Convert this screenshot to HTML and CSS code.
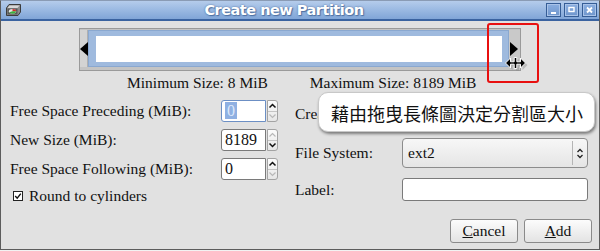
FILE: index.html
```html
<!DOCTYPE html>
<html>
<head>
<meta charset="utf-8">
<link rel="stylesheet" href="styles.css">
</head>
<body>
<div class="window">
  <div class="titlebar">
    <svg class="app-icon" width="17" height="14" viewBox="0 0 17 14">
      <path d="M1.5 5 L4 1.5 L15.5 1.5 L15.5 9 L13 12.5 L1.5 12.5 Z" fill="#8c8c8c" stroke="#3c3c3c" stroke-width="1"/>
      <path d="M2.5 5 L4.5 2.5 L14.5 2.5 L12.5 5 Z" fill="#d8d8d8"/>
      <rect x="2.5" y="5.5" width="10" height="6" fill="#5a5a5a"/>
      <ellipse cx="7.5" cy="8.3" rx="3.6" ry="2.4" fill="#e8e8e8"/>
      <path d="M7.5 8.3 L7.5 5.9 A3.6 2.4 0 0 1 11.1 8.3 Z" fill="#d42a2a"/>
      <path d="M7.5 8.3 L11.1 8.3 A3.6 2.4 0 0 1 4.2 9.3 Z" fill="#3fae3f"/>
    </svg>
    <div class="title">Create new Partition</div>
    <div class="wm-buttons">
      <span class="wm-btn"><svg width="13" height="12" viewBox="0 0 13 12"><rect x="4" y="8" width="5" height="2" fill="#fff"/></svg></span>
      <span class="wm-btn"><svg width="13" height="12" viewBox="0 0 13 12"><rect x="4" y="3.5" width="5" height="4" fill="none" stroke="#fff" stroke-width="1.4"/></svg></span>
      <span class="wm-btn"><svg width="13" height="12" viewBox="0 0 13 12"><path d="M4 3.5 L9 8.5 M9 3.5 L4 8.5" stroke="#fff" stroke-width="1.8"/></svg></span>
    </div>
  </div>

  <div class="content">
    <div class="slider">
      <div class="handle handle-left"><span class="tri-left"></span></div>
      <div class="bar"><div class="bar-inner"></div></div>
      <div class="handle handle-right"><span class="tri-right"></span></div>
    </div>

    <div class="limits">
      <span class="min">Minimum Size: 8 MiB</span>
      <span class="max">Maximum Size: 8189 MiB</span>
    </div>

    <div class="form">
      <div class="left-col">
        <div class="spin-grid">
          <span class="lbl">Free Space Preceding (MiB):</span>
          <div class="spin">
            <div class="spin-entry focused"><span class="sel">0</span></div>
            <div class="spin-btns">
              <span class="sb"><svg width="9" height="6" viewBox="0 0 9 6"><path d="M1.5 4.5 L4.5 1.5 L7.5 4.5" fill="none" stroke="#111" stroke-width="1.5"/></svg></span>
              <span class="sb"><svg width="9" height="6" viewBox="0 0 9 6"><path d="M1.5 1.5 L4.5 4.5 L7.5 1.5" fill="none" stroke="#b8b8b8" stroke-width="1.2"/></svg></span>
            </div>
          </div>

          <span class="lbl">New Size (MiB):</span>
          <div class="spin">
            <div class="spin-entry">8189</div>
            <div class="spin-btns">
              <span class="sb"><svg width="9" height="6" viewBox="0 0 9 6"><path d="M1.5 4.5 L4.5 1.5 L7.5 4.5" fill="none" stroke="#b8b8b8" stroke-width="1.2"/></svg></span>
              <span class="sb"><svg width="9" height="6" viewBox="0 0 9 6"><path d="M1.5 1.5 L4.5 4.5 L7.5 1.5" fill="none" stroke="#111" stroke-width="1.5"/></svg></span>
            </div>
          </div>

          <span class="lbl">Free Space Following (MiB):</span>
          <div class="spin">
            <div class="spin-entry">0</div>
            <div class="spin-btns">
              <span class="sb"><svg width="9" height="6" viewBox="0 0 9 6"><path d="M1.5 4.5 L4.5 1.5 L7.5 4.5" fill="none" stroke="#111" stroke-width="1.5"/></svg></span>
              <span class="sb"><svg width="9" height="6" viewBox="0 0 9 6"><path d="M1.5 1.5 L4.5 4.5 L7.5 1.5" fill="none" stroke="#b8b8b8" stroke-width="1.2"/></svg></span>
            </div>
          </div>
        </div>
        <div class="check">
          <svg class="checkbox" width="10" height="10" viewBox="0 0 10 10">
            <rect x="0.5" y="0.5" width="9" height="9" fill="#fff" stroke="#222" stroke-width="1"/>
            <path d="M2.2 5 L4.2 7.2 L7.8 2.6" fill="none" stroke="#111" stroke-width="1.4"/>
          </svg>
          <span>Round to cylinders</span>
        </div>
      </div>

      <div class="right-col">
        <div class="fields">
          <span class="lbl">Create as:</span>
          <div class="combo"></div>

          <span class="lbl">File System:</span>
          <div class="combo">
            <span class="combo-text">ext2</span>
            <span class="combo-arrow">
              <svg width="8" height="11" viewBox="0 0 8 11"><path d="M1.5 4 L4 1.5 L6.5 4 M1.5 7 L4 9.5 L6.5 7" fill="none" stroke="#222" stroke-width="1.3"/></svg>
            </span>
          </div>

          <span class="lbl">Label:</span>
          <div class="entry"></div>
        </div>
        <div class="actions">
          <button class="btn"><u>C</u>ancel</button>
          <button class="btn"><u>A</u>dd</button>
        </div>
      </div>
    </div>
  </div>

  <div class="tooltip">藉由拖曳長條圖決定分割區大小</div>
  <div class="highlight"></div>
  <svg class="cursor" width="24" height="17" viewBox="0 0 24 17">
    <path d="M2 8.5 L7 3.5 L7 7 L10.5 7 L10.5 3 L13.5 3 L13.5 7 L17 7 L17 3.5 L22 8.5 L17 13.5 L17 10 L13.5 10 L13.5 14 L10.5 14 L10.5 10 L7 10 L7 13.5 Z" fill="#777" opacity="0.35" transform="translate(1.5,1.5)"/>
    <path d="M1.5 8 L6.5 3 L6.5 6.8 L10.2 6.8 L10.2 2.5 L12.8 2.5 L12.8 6.8 L16.5 6.8 L16.5 3 L21.5 8 L16.5 13 L16.5 9.2 L12.8 9.2 L12.8 13.5 L10.2 13.5 L10.2 9.2 L6.5 9.2 L6.5 13 Z" fill="#000" stroke="#fff" stroke-width="1" stroke-linejoin="round"/>
  </svg>
</div>
</body>
</html>
```

FILE: styles.css
```css
* { box-sizing: border-box; }

html, body {
  margin: 0;
  padding: 0;
}

body {
  width: 600px;
  height: 251px;
  overflow: hidden;
  background: #f2f2f2;
  font-family: "Liberation Serif", serif;
  font-size: 15.5px;
  color: #111;
}

.window {
  position: relative;
  width: 600px;
  height: 250px;
  border: 1px solid #5c5c5c;
  border-top-color: #8a9bb4;
  background: #e1e1e1;
}

/* ---------- title bar ---------- */
.titlebar {
  display: flex;
  align-items: center;
  height: 20px;
  background: linear-gradient(#b5cceb, #9ab9e2 50%, #80a5d7);
  border-bottom: 2px solid #3a63a0;
}

.app-icon {
  margin-left: 4px;
  flex: none;
}

.title {
  flex: 1;
  text-align: center;
  font-family: "DejaVu Sans", sans-serif;
  font-weight: bold;
  font-size: 14.5px;
  letter-spacing: -0.5px;
  color: #fff;
  text-shadow: 0 0 2px #47689a, 1px 1px 1px #5174a6;
  line-height: 18px;
}

.wm-buttons {
  display: flex;
  gap: 3px;
  margin-right: 2px;
}

.wm-btn {
  display: flex;
  width: 15px;
  height: 14px;
  border: 1px solid #355d96;
  background: linear-gradient(#8aaee0, #6f96cc);
  box-shadow: inset 0 0 0 1px #a9c3e8;
}

/* ---------- slider ---------- */
.content {
  padding-top: 7px;
}

.slider {
  display: flex;
  margin-left: 78px;
  width: 442px;
  height: 43px;
  padding: 1px 0 3px;
  background: #c4c4c4;
  border: 1px solid #9a9a9a;
}

.handle {
  display: flex;
  align-items: center;
  background: #d3d3d3;
}

.handle-left {
  width: 8px;
  border-right: 1px solid #b0b0b0;
}

.handle-right {
  width: 11px;
  padding-left: 1px;
  background: #c9c9c9;
}

.tri-left {
  width: 0;
  height: 0;
  border-right: 8px solid #000;
  border-top: 7px solid transparent;
  border-bottom: 7px solid transparent;
}

.tri-right {
  width: 0;
  height: 0;
  border-left: 8px solid #000;
  border-top: 7.5px solid transparent;
  border-bottom: 7.5px solid transparent;
}

.bar {
  flex: 1;
  padding: 5px 6px 4px 7px;
  background: #9fbade;
  border: 1px solid #8aa8d0;
}

.bar-inner {
  height: 100%;
  background: #fff;
}

/* ---------- limits ---------- */
.limits {
  display: flex;
  height: 18px;
  line-height: 18px;
  margin-top: 3px;
}

.min {
  margin-left: 126px;
}

.max {
  margin-left: 42px;
}

/* ---------- form ---------- */
.form {
  display: flex;
  padding-left: 9px;
}

.left-col {
  display: flex;
  flex-direction: column;
  padding-top: 8px;
}

.spin-grid {
  display: grid;
  grid-template-columns: 211px 57px;
  grid-auto-rows: 22px;
  row-gap: 7px;
  align-items: center;
}

.lbl {
  line-height: 18px;
  white-space: nowrap;
}

.spin {
  display: flex;
  gap: 1px;
  height: 22px;
}

.spin-entry {
  width: 45px;
  height: 22px;
  padding-left: 3px;
  line-height: 20px;
  font-size: 16px;
  background: #fff;
  border: 1px solid #7a7a7a;
  border-radius: 3px 0 0 3px;
}

.spin-entry.focused {
  border-color: #6c8fc4;
}

.sel {
  display: inline-block;
  padding: 0 2px;
  line-height: 17px;
  margin-top: 1px;
  background: #8fb0e2;
  color: #dce8fa;
}

.spin-btns {
  display: flex;
  flex-direction: column;
  width: 11px;
  height: 22px;
  border: 1px solid #a3a3a3;
  border-radius: 0 3px 3px 0;
  background: linear-gradient(#fbfbfb, #e6e6e6);
}

.sb {
  flex: 1;
  display: flex;
  align-items: center;
  justify-content: center;
}

.sb + .sb {
  border-top: 1px solid #c4c4c4;
}

.check {
  display: flex;
  align-items: center;
  gap: 6px;
  margin-top: 7px;
  padding-left: 3px;
  line-height: 18px;
}

.checkbox {
  flex: none;
}

/* ---------- right column ---------- */
.right-col {
  display: flex;
  flex-direction: column;
  margin-left: 17px;
  width: 297px;
  padding-top: 8px;
}

.fields {
  display: grid;
  grid-template-columns: 107px 186px;
  grid-template-rows: 28px 30px 23px;
  row-gap: 10px;
  align-items: center;
}

.combo {
  display: flex;
  align-items: stretch;
  height: 30px;
  border: 1px solid #8c8c8c;
  border-radius: 4px;
  background: linear-gradient(#f7f7f7, #e5e5e5);
}

.combo-text {
  flex: 1;
  padding-left: 5px;
  line-height: 28px;
}

.combo-arrow {
  width: 15px;
  display: flex;
  align-items: center;
  justify-content: center;
  border-left: 1px solid #b5b5b5;
  margin: 2px 0;
}

.entry {
  height: 23px;
  background: #fff;
  border: 1px solid #7a7a7a;
  border-radius: 3px;
}

.actions {
  display: flex;
  justify-content: flex-end;
  gap: 6px;
  margin-top: 18px;
}

.btn {
  width: 68px;
  height: 24px;
  padding: 0;
  font-family: "Liberation Serif", serif;
  font-size: 15.5px;
  color: #111;
  border: 1px solid #8a8a8a;
  border-radius: 3px;
  background: linear-gradient(#fcfcfc, #e3e3e3);
}

/* ---------- overlays ---------- */
.tooltip {
  position: absolute;
  left: 317px;
  top: 91px;
  width: 277px;
  height: 40px;
  padding-left: 12px;
  line-height: 40px;
  font-family: "Noto Sans CJK TC", sans-serif;
  font-size: 18px;
  color: #111;
  background: #fff;
  border: 1px solid #c8c8c8;
  border-radius: 10px;
  box-shadow: 1px 2px 3px rgba(0, 0, 0, 0.45);
  white-space: nowrap;
}

.highlight {
  position: absolute;
  left: 486px;
  top: 22px;
  width: 52px;
  height: 60px;
  border: 2px solid #e81010;
  border-radius: 3px;
}

.cursor {
  position: absolute;
  left: 503px;
  top: 54px;
}
```
